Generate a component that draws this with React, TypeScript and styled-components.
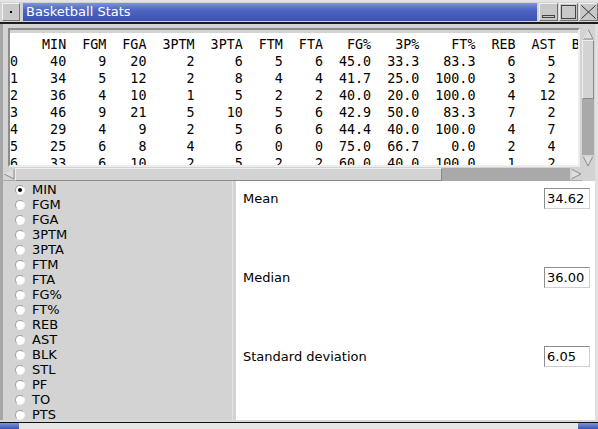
import React from "react";
import styled, { createGlobalStyle } from "styled-components";

const Global = createGlobalStyle`
  html, body { margin: 0; padding: 0; background: #d3d3d3; }
  #root { width: 598px; height: 429px; overflow: hidden; }
`;

const Screen = styled.div`
  width: 598px;
  height: 429px;
  display: flex;
  flex-direction: column;
  background: #d3d3d3;
  font-family: "DejaVu Sans", sans-serif;
  font-size: 13px;
  color: #000;
  overflow: hidden;
`;

const TopStrip = styled.div`
  flex: none;
  height: 2px;
  background: #e4e4e4;
`;

const TitleBar = styled.div`
  flex: none;
  height: 20px;
  box-sizing: border-box;
  padding: 1px 0 1px 2px;
  display: flex;
  align-items: stretch;
  background: #d3d3d3;
`;

const MenuButton = styled.div`
  width: 18px;
  box-sizing: border-box;
  border: 1px solid;
  border-color: #f2f2f2 #7a7a7a #7a7a7a #f2f2f2;
  background: #c9c9c9;
  display: flex;
  align-items: center;
  justify-content: center;
  &::after {
    content: "";
    width: 2px;
    height: 2px;
    background: #000;
  }
`;

const TitleText = styled.div`
  flex: 1;
  margin: 0 1px 0 3px;
  padding-left: 3px;
  background: linear-gradient(#7d93df 0%, #5068c4 35%, #3a52b0 100%);
  color: #fff;
  font-size: 13px;
  line-height: 18px;
  white-space: nowrap;
`;

const WinButton = styled.div`
  width: 19px;
  margin-left: 1px;
  box-sizing: border-box;
  border: 1px solid;
  border-color: #f0f0f0 #6e6e6e #6e6e6e #f0f0f0;
  background: #c8c8c8;
  display: flex;
  align-items: center;
  justify-content: center;
  svg { display: block; }
`;

const TitleRule = styled.div`
  flex: none;
  height: 2px;
  background: #1c1c1c;
`;

const Body = styled.div`
  flex: 1;
  display: flex;
  min-height: 0;
`;

const LeftEdge = styled.div`
  width: 3px;
  background: #a6a6a6;
`;

const RightEdge = styled.div`
  width: 3px;
  background: #e0e0e0;
`;

const Main = styled.div`
  flex: 1;
  display: flex;
  flex-direction: column;
  min-width: 0;
`;

const TablePane = styled.div`
  flex: none;
  height: 157px;
  display: grid;
  grid-template-columns: 1fr 12px;
  grid-template-rows: 144px 13px;
  padding-right: 1px;
`;

const TextArea = styled.div`
  padding: 4px 2px 1px 5px;
  min-width: 0;
  display: flex;
`;

const TextBox = styled.div`
  flex: 1;
  box-sizing: border-box;
  border: 2px solid;
  border-color: #8c8c8c #ededed #ededed #8c8c8c;
  box-shadow: inset 0 3px 0 #d3d3d3;
  background: #fff;
  overflow: hidden;
  padding: 6px 0 0 0;
  min-width: 0;
`;

const TextLine = styled.div`
  font-family: "DejaVu Sans Mono", monospace;
  font-size: 13.33px;
  line-height: 17px;
  white-space: pre;
  height: 17px;
  color: #000;
`;

const VScroll = styled.div`
  padding: 4px 0 1px 0;
  display: flex;
  flex-direction: column;
`;

const HScroll = styled.div`
  display: flex;
  background: #a9a9a9;
`;

const Arrow = styled.div`
  flex: none;
  width: 12px;
  height: 12px;
  background: #d3d3d3;
  display: flex;
  align-items: center;
  justify-content: center;
  svg { display: block; }
`;

const VThumb = styled.div`
  flex: none;
  height: 59px;
  box-sizing: border-box;
  border: 1px solid;
  border-color: #eeeeee #8a8a8a #8a8a8a #eeeeee;
  background: #d3d3d3;
`;

const Track = styled.div`
  flex: 1;
  background: #a9a9a9;
`;

const HThumb = styled.div`
  flex: none;
  width: 427px;
  box-sizing: border-box;
  border: 1px solid;
  border-color: #eeeeee #8a8a8a #8a8a8a #eeeeee;
  background: #d3d3d3;
`;

const Corner = styled.div`
  background: #d3d3d3;
`;

const BottomPane = styled.div`
  flex: 1;
  display: grid;
  grid-template-columns: 229px 4px 1fr;
  padding-bottom: 2px;
  min-height: 0;
`;

const RadioList = styled.div`
  padding-top: 1px;
  display: flex;
  flex-direction: column;
`;

const RadioRow = styled.div`
  height: 15px;
  display: flex;
  align-items: center;
  padding-left: 12px;
  font-size: 13px;
  line-height: 15px;
`;

const RadioDot = styled.span<{ $on: boolean }>`
  width: 10px;
  height: 10px;
  box-sizing: border-box;
  border-radius: 50%;
  border: 1px solid;
  border-color: #a0a0a0 #f4f4f4 #f4f4f4 #a0a0a0;
  background: #fff;
  margin-right: 7px;
  display: flex;
  align-items: center;
  justify-content: center;
  &::after {
    content: "";
    width: 4px;
    height: 4px;
    border-radius: 50%;
    background: ${(p) => (p.$on ? "#000" : "transparent")};
  }
`;

const Sash = styled.div`
  background: #d3d3d3;
  border-left: 1px solid #e4e4e4;
`;

const StatsPanel = styled.div`
  background: #fff;
  display: grid;
  grid-template-rows: repeat(3, 79px);
`;

const StatRow = styled.div`
  display: flex;
  align-items: flex-start;
  justify-content: space-between;
  padding: 7px 5px 0 7px;
`;

const StatLabel = styled.div`
  line-height: 21px;
  font-size: 13px;
`;

const StatEntry = styled.div`
  width: 46px;
  height: 21px;
  box-sizing: border-box;
  border: 1px solid;
  border-color: #8c8c8c #d0d0d0 #d0d0d0 #8c8c8c;
  padding-left: 2px;
  line-height: 19px;
  font-size: 13px;
  background: #fff;
`;

const BottomGap = styled.div`
  flex: none;
  height: 2px;
  background: #d8d8d8;
`;

const BottomRule = styled.div`
  flex: none;
  height: 1px;
  background: #111;
`;

const Taskbar = styled.div`
  flex: none;
  height: 6px;
  display: flex;
  background: #e6e6e6;
`;

const TaskBlue = styled.div<{ $w: number }>`
  width: ${(p) => p.$w}px;
  background: linear-gradient(#7d93df, #3a52b0);
`;

const TaskFill = styled.div`
  flex: 1;
`;

const cols = ["MIN", "FGM", "FGA", "3PTM", "3PTA", "FTM", "FTA", "FG%", "3P%", "FT%", "REB", "AST", "BLK"];
const data: string[][] = [
  ["40", "9", "20", "2", "6", "5", "6", "45.0", "33.3", "83.3", "6", "5", "1"],
  ["34", "5", "12", "2", "8", "4", "4", "41.7", "25.0", "100.0", "3", "2", "0"],
  ["36", "4", "10", "1", "5", "2", "2", "40.0", "20.0", "100.0", "4", "12", "0"],
  ["46", "9", "21", "5", "10", "5", "6", "42.9", "50.0", "83.3", "7", "2", "1"],
  ["29", "4", "9", "2", "5", "6", "6", "44.4", "40.0", "100.0", "4", "7", "0"],
  ["25", "6", "8", "4", "6", "0", "0", "75.0", "66.7", "0.0", "2", "4", "0"],
  ["33", "6", "10", "2", "5", "2", "2", "60.0", "40.0", "100.0", "1", "2", "0"],
];
const widths = cols.map((c, i) => Math.max(c.length, ...data.map((r) => r[i].length)));
const idxW = 2;
const headerLine = " ".repeat(idxW) + cols.map((c, i) => "  " + c.padStart(widths[i])).join("");
const rowLines = data.map(
  (r, ri) => String(ri).padEnd(idxW) + r.map((v, i) => "  " + v.padStart(widths[i])).join("")
);

const radioItems = ["MIN", "FGM", "FGA", "3PTM", "3PTA", "FTM", "FTA", "FG%", "FT%", "REB", "AST", "BLK", "STL", "PF", "TO", "PTS"];

const stats = [
  { label: "Mean", value: "34.62" },
  { label: "Median", value: "36.00" },
  { label: "Standard deviation", value: "6.05" },
];

const TriUp = () => (
  <svg width="12" height="12" viewBox="0 0 12 12">
    <polygon points="6,1 11,11 1,11" fill="#dedede" stroke="#8a8a8a" strokeWidth="1" />
    <line x1="6" y1="1" x2="1" y2="11" stroke="#f4f4f4" strokeWidth="1" />
  </svg>
);
const TriDown = () => (
  <svg width="12" height="12" viewBox="0 0 12 12">
    <polygon points="1,1 11,1 6,11" fill="#dedede" stroke="#8a8a8a" strokeWidth="1" />
    <line x1="1" y1="1" x2="11" y2="1" stroke="#f4f4f4" strokeWidth="1" />
  </svg>
);
const TriLeft = () => (
  <svg width="12" height="12" viewBox="0 0 12 12">
    <polygon points="1,6 11,1 11,11" fill="#dedede" stroke="#8a8a8a" strokeWidth="1" />
    <line x1="1" y1="6" x2="11" y2="1" stroke="#f4f4f4" strokeWidth="1" />
  </svg>
);
const TriRight = () => (
  <svg width="12" height="12" viewBox="0 0 12 12">
    <polygon points="1,1 11,6 1,11" fill="#dedede" stroke="#8a8a8a" strokeWidth="1" />
    <line x1="1" y1="1" x2="1" y2="11" stroke="#f4f4f4" strokeWidth="1" />
  </svg>
);

export default function App() {
  return (
    <>
      <Global />
      <Screen>
        <TopStrip />
        <TitleBar>
          <MenuButton />
          <TitleText>Basketball Stats</TitleText>
          <WinButton>
            <svg width="15" height="14" viewBox="0 0 15 14">
              <rect x="1.5" y="10.5" width="12" height="2" fill="none" stroke="#444" strokeWidth="1" />
            </svg>
          </WinButton>
          <WinButton>
            <svg width="15" height="14" viewBox="0 0 15 14">
              <rect x="0.5" y="0.5" width="14" height="13" fill="none" stroke="#444" strokeWidth="1" />
            </svg>
          </WinButton>
          <WinButton>
            <svg width="15" height="14" viewBox="0 0 15 14">
              <line x1="0.5" y1="0.5" x2="14.5" y2="13.5" stroke="#333" strokeWidth="1" />
              <line x1="14.5" y1="0.5" x2="0.5" y2="13.5" stroke="#333" strokeWidth="1" />
            </svg>
          </WinButton>
        </TitleBar>
        <TitleRule />
        <Body>
          <LeftEdge />
          <Main>
            <TablePane>
              <TextArea>
                <TextBox>
                  <TextLine>{headerLine}</TextLine>
                  {rowLines.map((l, i) => (
                    <TextLine key={i}>{l}</TextLine>
                  ))}
                </TextBox>
              </TextArea>
              <VScroll>
                <Arrow>
                  <TriUp />
                </Arrow>
                <VThumb />
                <Track />
                <Arrow>
                  <TriDown />
                </Arrow>
              </VScroll>
              <HScroll>
                <Arrow>
                  <TriLeft />
                </Arrow>
                <HThumb />
                <Track />
                <Arrow>
                  <TriRight />
                </Arrow>
              </HScroll>
              <Corner />
            </TablePane>
            <BottomPane>
              <RadioList>
                {radioItems.map((r, i) => (
                  <RadioRow key={r}>
                    <RadioDot $on={i === 0} />
                    {r}
                  </RadioRow>
                ))}
              </RadioList>
              <Sash />
              <StatsPanel>
                {stats.map((s) => (
                  <StatRow key={s.label}>
                    <StatLabel>{s.label}</StatLabel>
                    <StatEntry>{s.value}</StatEntry>
                  </StatRow>
                ))}
              </StatsPanel>
            </BottomPane>
          </Main>
          <RightEdge />
        </Body>
        <BottomGap />
        <BottomRule />
        <Taskbar>
          <TaskBlue $w={19} />
          <TaskFill />
          <TaskBlue $w={20} />
        </Taskbar>
      </Screen>
    </>
  );
}
